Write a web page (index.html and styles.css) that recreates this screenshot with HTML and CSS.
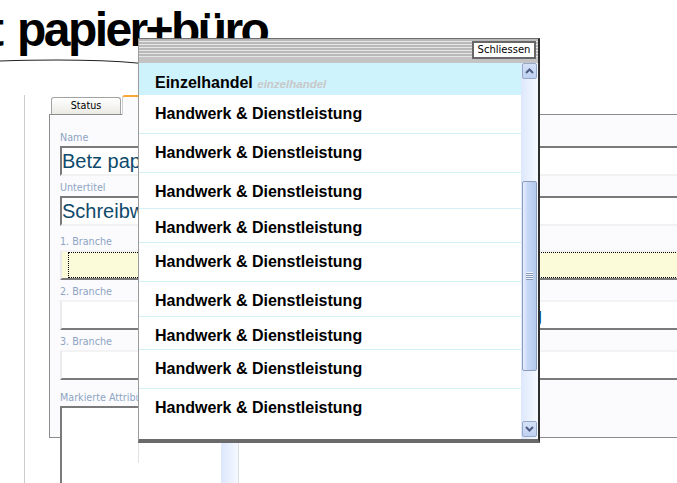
FILE: index.html
```html
<!DOCTYPE html>
<html lang="de">
<head>
  <meta charset="UTF-8">
  <title>Firma bearbeiten</title>
  <link rel="stylesheet" href="styles.css">
</head>
<body>

<div class="page">
  <header class="brand">
    <h1 class="brand-title">t papier+büro</h1>
    <svg class="brand-swoosh" width="300" height="8" viewBox="0 0 300 8">
      <path d="M0 5 C 40 3.6, 90 2.6, 140 7.2 S 230 6, 300 4" fill="none" stroke="#222" stroke-width="1.1"/>
    </svg>
  </header>

  <main class="workspace">
    <div class="tabs">
      <div class="tab">Status</div>
      <div class="tab tab-active">Allgemein</div>
    </div>

    <div class="panel">
      <div class="field">
        <label class="field-label" for="name">Name</label>
        <input class="text-input" id="name" type="text" value="Betz papier+büro">
      </div>
      <div class="field">
        <label class="field-label" for="subtitle">Untertitel</label>
        <input class="text-input" id="subtitle" type="text" value="Schreibwaren &amp; Bürobedarf">
      </div>
      <div class="field field-spaced">
        <span class="field-label">1. Branche</span>
        <div class="select select-focused"><span class="focus-ring"></span></div>
      </div>
      <div class="field">
        <span class="field-label">2. Branche</span>
        <div class="select"><span class="select-value">Handwerk &amp; Dienstleistung</span></div>
      </div>
      <div class="field">
        <span class="field-label">3. Branche</span>
        <div class="select"></div>
      </div>
      <div class="field field-spaced-lg">
        <span class="field-label">Markierte Attribute</span>
        <div class="textarea"><span class="textarea-track"></span></div>
      </div>
    </div>
  </main>

  <!-- Branchen-Auswahl -->
  <div class="picker">
    <div class="picker-head">
      <button type="button" class="picker-close">Schliessen</button>
    </div>
    <div class="picker-body">
      <ul class="picker-list">
        <li class="picker-item is-selected h32">Einzelhandel <span class="item-hint">einzelhandel</span></li>
        <li class="picker-item h39">Handwerk &amp; Dienstleistung</li>
        <li class="picker-item h39">Handwerk &amp; Dienstleistung</li>
        <li class="picker-item h36">Handwerk &amp; Dienstleistung</li>
        <li class="picker-item h34">Handwerk &amp; Dienstleistung</li>
        <li class="picker-item h39">Handwerk &amp; Dienstleistung</li>
        <li class="picker-item h35">Handwerk &amp; Dienstleistung</li>
        <li class="picker-item h33">Handwerk &amp; Dienstleistung</li>
        <li class="picker-item h39">Handwerk &amp; Dienstleistung</li>
        <li class="picker-item h-last">Handwerk &amp; Dienstleistung</li>
      </ul>
      <div class="scrollbar">
        <span class="scroll-btn">
          <svg width="9" height="6" viewBox="0 0 9 6"><polyline points="1,5 4.5,1.5 8,5" fill="none" stroke="#4b5e82" stroke-width="2"/></svg>
        </span>
        <div class="scroll-track">
          <span class="scroll-thumb"><span class="scroll-grip"></span></span>
        </div>
        <span class="scroll-btn">
          <svg width="9" height="6" viewBox="0 0 9 6"><polyline points="1,1 4.5,4.5 8,1" fill="none" stroke="#4b5e82" stroke-width="2"/></svg>
        </span>
      </div>
    </div>
  </div>
</div>

</body>
</html>
```

FILE: styles.css
```css
body {
  margin: 0;
  background: #fff;
  font-family: "Liberation Sans", Arial, sans-serif;
}
.page {
  position: relative;
  width: 677px;
  height: 483px;
  overflow: hidden;
}

/* header */
.brand {
  height: 95px;
}
.brand-title {
  margin: 0 0 0 -12px;
  padding-top: 6px;
  font-size: 48px;
  line-height: 48px;
  font-weight: bold;
  letter-spacing: -2.6px;
  word-spacing: 5px;
  white-space: nowrap;
  color: #000;
}
.brand-swoosh {
  display: block;
  margin-top: 2px;
}

/* form area */
.workspace {
  margin-left: 24px;
  border-left: 1px solid #cdcdcd;
  padding-left: 24px;
  height: 388px;
}
.tabs {
  display: flex;
  align-items: flex-end;
  height: 19px;
  padding-left: 2px;
}
.tab {
  width: 70px;
  height: 17px;
  box-sizing: border-box;
  border: 1px solid #a2a2a2;
  border-bottom: 0;
  border-radius: 3px 3px 0 0;
  background: linear-gradient(#ffffff, #ebeae4);
  font-family: "DejaVu Sans", sans-serif;
  font-size: 9.6px;
  line-height: 15px;
  text-align: center;
  color: #000;
}
.tab-active {
  position: relative;
  z-index: 1;
  width: 110px;
  height: 20px;
  margin: 0 0 -1px 1px;
  border-top: 2px solid #f6a735;
  border-left-color: #cfcfcf;
  background: #fbfbfe;
}
.panel {
  width: 720px;
  height: 324px;
  box-sizing: border-box;
  border: 1px solid #8c8c8c;
  background: #fbfbfe;
  padding: 15px 0 0 10px;
}
.field + .field {
  margin-top: 4px;
}
.field.field-spaced {
  margin-top: 8px;
}
.field.field-spaced-lg {
  margin-top: 10px;
}
.field-label {
  display: block;
  height: 16px;
  line-height: 16px;
  font-family: "DejaVu Sans", sans-serif;
  font-size: 9.6px;
  color: #8ea4c2;
  white-space: nowrap;
}
.text-input {
  display: block;
  width: 660px;
  height: 30px;
  box-sizing: border-box;
  border: 2px solid;
  border-color: #7a7a7a #f1f1f1 #f1f1f1 #7a7a7a;
  background: #fff;
  padding: 0;
  font-family: "Liberation Sans", Arial, sans-serif;
  font-size: 20px;
  color: #0f4a6b;
  outline: none;
}
.select {
  width: 660px;
  height: 30px;
  box-sizing: border-box;
  border: 2px solid;
  border-color: #f3f3f3 #f3f3f3 #7a7a7a #ebebeb;
  background: #fff;
}
.select-focused {
  background: #fbfbd9;
  padding-left: 6px;
}
.focus-ring {
  display: block;
  height: 100%;
  box-sizing: border-box;
  border: 1px dotted #000;
  border-right: 0;
}
.select-value {
  display: block;
  padding-left: 240px;
  font-size: 20px;
  line-height: 26px;
  color: #0f4a6b;
  white-space: nowrap;
}
.textarea {
  display: flex;
  justify-content: flex-end;
  width: 179px;
  height: 90px;
  box-sizing: border-box;
  border-style: solid;
  border-width: 2px 1px 0 2px;
  border-color: #7a7a7a #d8dde6 #7a7a7a #7a7a7a;
  background: #fff;
}
.textarea-track {
  width: 17px;
  background: linear-gradient(to right, #dbe7fc, #f5f8ff);
}

/* picker popup */
.picker {
  position: absolute;
  left: 138px;
  top: 38px;
  z-index: 5;
  display: flex;
  flex-direction: column;
  width: 402px;
  height: 405px;
  box-sizing: border-box;
  border-style: solid;
  border-width: 1px 2px 4px 1px;
  border-color: #6e6e6e #2e2e2e #6a6a6a #9b9b9b;
  background: #fff;
}
.picker::after {
  content: "";
  position: absolute;
  left: -1px;
  top: calc(100% + 4px);
  width: 1px;
  height: 20px;
  background: #e2e2e2;
}
.picker-head {
  display: flex;
  justify-content: flex-end;
  align-items: flex-start;
  height: 24px;
  box-sizing: border-box;
  padding-top: 2px;
  background: repeating-linear-gradient(#b9b9b9 0 2px, #e6e6e6 2px 3px) top / 100% 18px no-repeat, #c3c3c3;
}
.picker-close {
  width: 64px;
  height: 18px;
  margin-right: 2px;
  padding: 0;
  border: 2px solid #676767;
  background: #fff;
  font-family: "DejaVu Sans", sans-serif;
  font-size: 10px;
  line-height: 14px;
  color: #000;
  cursor: pointer;
}
.picker-body {
  flex: 1;
  display: flex;
  min-height: 0;
}
.picker-list {
  flex: 1;
  margin: 0;
  padding: 0;
  list-style: none;
  overflow: hidden;
}
.picker-item {
  box-sizing: border-box;
  padding: 9px 0 0 16px;
  border-bottom: 1px solid #d4f1f8;
  font-size: 16px;
  line-height: 20px;
  font-weight: bold;
  color: #000;
  white-space: nowrap;
}
.picker-item.is-selected {
  padding-top: 10px;
  background: #cef3fd;
  border-bottom-color: #cef3fd;
}
.item-hint {
  font-size: 11.5px;
  font-style: italic;
  color: #c8c8c8;
}
.h32 { height: 32px; }
.h33 { height: 33px; }
.h34 { height: 34px; }
.h35 { height: 35px; }
.h36 { height: 36px; }
.h39 { height: 39px; }
.h-last { height: 60px; }

.scrollbar {
  width: 17px;
  display: flex;
  flex-direction: column;
  align-items: center;
  padding-bottom: 2px;
  background: linear-gradient(to right, #dde8fc, #f7f9ff);
}
.scroll-btn {
  display: flex;
  align-items: center;
  justify-content: center;
  width: 15px;
  height: 16px;
  box-sizing: border-box;
  border: 1px solid #97a9c9;
  border-radius: 2px;
  background: linear-gradient(#d5e1f8, #bfd1f2);
}
.scroll-track {
  flex: 1;
}
.scroll-thumb {
  display: flex;
  align-items: center;
  justify-content: center;
  width: 15px;
  height: 190px;
  margin-top: 102px;
  box-sizing: border-box;
  border: 1px solid #8b9cbc;
  border-radius: 2px;
  background: linear-gradient(to right, #e6eefd, #c7d8f6 35%, #b4caef);
}
.scroll-grip {
  width: 7px;
  height: 8px;
  background: repeating-linear-gradient(#f2f6fe 0 1px, #8597b9 1px 2px);
}
```
